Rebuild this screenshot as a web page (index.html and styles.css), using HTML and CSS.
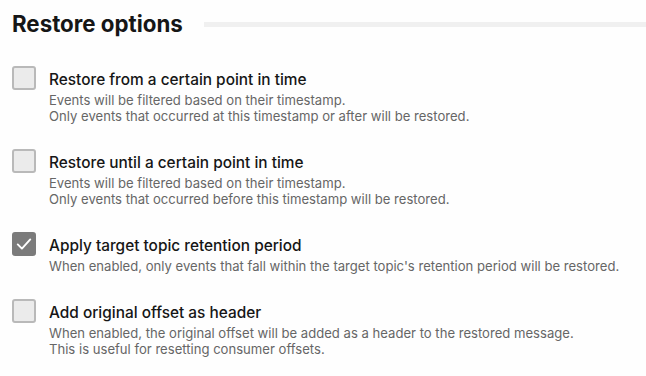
FILE: index.html
```html
<!DOCTYPE html>
<html lang="en">
<head>
    <meta charset="UTF-8">
    <title>Restore options</title>
    <link rel="stylesheet" href="styles.css">
</head>
<body>
    <div class="section">
        <div class="section-header">
            <h2>Restore options</h2>
            <div class="divider"></div>
        </div>

        <div class="options">
            <label class="option">
                <span class="checkbox"></span>
                <span class="option-text">
                    <span class="option-title">Restore from a certain point in time</span>
                    <span class="option-desc">Events will be filtered based on their timestamp.<br>Only events that occurred at this timestamp or after will be restored.</span>
                </span>
            </label>

            <label class="option">
                <span class="checkbox"></span>
                <span class="option-text">
                    <span class="option-title">Restore until a certain point in time</span>
                    <span class="option-desc">Events will be filtered based on their timestamp.<br>Only events that occurred before this timestamp will be restored.</span>
                </span>
            </label>

            <label class="option">
                <span class="checkbox checked">
                    <svg width="20" height="20" viewBox="0 0 24 24" fill="none" stroke="currentColor" stroke-width="2.3" stroke-linecap="round" stroke-linejoin="round">
                        <path d="M4.5 12.5l5 5L19.5 6.5"/>
                    </svg>
                </span>
                <span class="option-text">
                    <span class="option-title">Apply target topic retention period</span>
                    <span class="option-desc">When enabled, only events that fall within the target topic's retention period will be restored.</span>
                </span>
            </label>

            <label class="option">
                <span class="checkbox"></span>
                <span class="option-text">
                    <span class="option-title">Add original offset as header</span>
                    <span class="option-desc">When enabled, the original offset will be added as a header to the restored message.<br>This is useful for resetting consumer offsets.</span>
                </span>
            </label>
        </div>
    </div>
</body>
</html>
```

FILE: styles.css
```css
body {
    margin: 0;
    background: #fefefe;
    font-family: Inter, "Noto Sans", sans-serif;
    color: #1a1a1a;
}

.section {
    padding: 8px 0 0 12px;
}

.section-header {
    display: flex;
    align-items: center;
    gap: 21px;
    height: 30px;
}

.section-header h2 {
    margin: 0;
    font-size: 22.3px;
    font-weight: 700;
    color: #161616;
    white-space: nowrap;
}

.divider {
    flex: 1;
    height: 5px;
    margin-top: 2px;
    background: #f0f0f0;
}

.options {
    display: flex;
    flex-direction: column;
    gap: 25px;
    margin-top: 28px;
}

.option {
    display: flex;
    align-items: flex-start;
    gap: 13px;
    cursor: pointer;
}

.checkbox {
    flex: none;
    width: 20px;
    height: 20px;
    border: 2px solid #b9b9b9;
    border-radius: 3px;
    background: #ebebeb;
    display: flex;
    align-items: center;
    justify-content: center;
    color: #fff;
}

.checkbox.checked {
    background: #7b7b7b;
    border-color: #7b7b7b;
}

.option-text {
    display: flex;
    flex-direction: column;
    gap: 2px;
    padding-top: 4px;
}

.option-title {
    font-size: 15.4px;
    font-weight: 500;
    line-height: 20px;
    color: #161616;
}

.option-desc {
    font-size: 13.1px;
    line-height: 16px;
    color: #666;
}
```
